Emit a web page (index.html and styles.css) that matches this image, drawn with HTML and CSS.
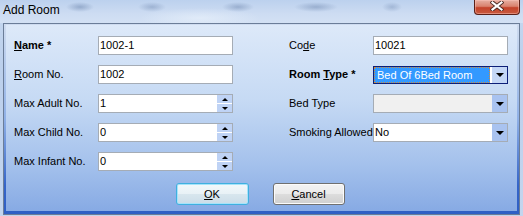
FILE: index.html
```html
<!DOCTYPE html>
<html>
<head>
<meta charset="utf-8">
<link rel="stylesheet" href="styles.css">
</head>
<body>
<div class="window">
  <div class="titlebar">
    <span class="title">Add Room</span>
    <div class="close">
      <svg width="14" height="10" viewBox="0 0 14 10">
        <path d="M2.5 1.5 L11.5 8.5 M11.5 1.5 L2.5 8.5" stroke="#4a2a24" stroke-width="4" stroke-linecap="square"/>
        <path d="M2.5 1.5 L11.5 8.5 M11.5 1.5 L2.5 8.5" stroke="#ffffff" stroke-width="2.2" stroke-linecap="square"/>
      </svg>
    </div>
  </div>
  <div class="client">
    <div class="form">
      <div class="col">
        <label class="lbl bold"><u>N</u>ame *</label>
        <div class="field"><span class="val">1002-1</span></div>

        <label class="lbl"><u>R</u>oom No.</label>
        <div class="field"><span class="val">1002</span></div>

        <label class="lbl">Max Adult No.</label>
        <div class="field"><span class="val">1</span><span class="spin"><span class="sb"><i class="up"></i></span><span class="sb"><i class="down"></i></span></span></div>

        <label class="lbl">Max Child No.</label>
        <div class="field"><span class="val">0</span><span class="spin"><span class="sb"><i class="up"></i></span><span class="sb"><i class="down"></i></span></span></div>

        <label class="lbl">Max Infant No.</label>
        <div class="field"><span class="val">0</span><span class="spin"><span class="sb"><i class="up"></i></span><span class="sb"><i class="down"></i></span></span></div>
      </div>
      <div class="col">
        <label class="lbl">Co<u>d</u>e</label>
        <div class="field"><span class="val">10021</span></div>

        <label class="lbl bold">Room <u>T</u>ype *</label>
        <div class="field select focused"><span class="sel">Bed Of 6Bed Room</span><span class="drop"><i class="down big"></i></span></div>

        <label class="lbl">Bed Type</label>
        <div class="field select disabled"><span class="val"></span><span class="drop"><i class="down big"></i></span></div>

        <label class="lbl">Smoking Allowed</label>
        <div class="field select"><span class="val">No</span><span class="drop"><i class="down big"></i></span></div>
      </div>
    </div>
    <div class="buttons">
      <button class="btn default"><u>O</u>K</button>
      <button class="btn cancel"><u>C</u>ancel</button>
    </div>
  </div>
</div>
</body>
</html>
```
FILE: styles.css
```css
html, body {
  margin: 0;
  padding: 0;
}
body {
  width: 523px;
  height: 216px;
  overflow: hidden;
  font-family: "Liberation Sans", Arial, sans-serif;
  font-size: 11px;
  color: #000;
}
.window {
  width: 523px;
  height: 216px;
  background: linear-gradient(#c6d8f0, #bcd0ec 30%, #c3d5ee);
  display: flex;
  flex-direction: column;
}
.titlebar {
  height: 23px;
  display: flex;
  justify-content: space-between;
  align-items: flex-start;
  background:
    radial-gradient(ellipse 14px 5px at 80px 7px, rgba(110,135,175,0.55), transparent),
    radial-gradient(ellipse 14px 5px at 152px 7px, rgba(110,135,175,0.45), transparent),
    radial-gradient(ellipse 16px 5px at 238px 7px, rgba(110,135,175,0.5), transparent),
    radial-gradient(ellipse 22px 5px at 316px 7px, rgba(110,135,175,0.5), transparent),
    radial-gradient(ellipse 10px 5px at 392px 7px, rgba(110,135,175,0.4), transparent),
    radial-gradient(ellipse 60px 10px at 200px 18px, rgba(235,243,252,0.6), transparent),
    linear-gradient(#bcd1ee, #cddcf2 60%, #d3e1f4);
}
.title {
  font-size: 12px;
  line-height: 14px;
  padding: 3px 0 0 3px;
  color: #000;
}
.close {
  width: 46px;
  height: 15px;
  margin-right: 3px;
  box-sizing: border-box;
  border: 1px solid #5b2018;
  border-top: none;
  border-radius: 0 0 4px 4px;
  background: linear-gradient(#e7b0a3, #d9826e 45%, #c4432b 55%, #c85a3e);
  box-shadow: inset 0 0 0 1px rgba(255,200,190,0.45);
  display: flex;
  justify-content: center;
  align-items: flex-start;
}
.close svg {
  display: block;
  margin-top: 1px;
}
.client {
  margin: 1px 0 0 4px;
  width: 515px;
  height: 190px;
  box-sizing: border-box;
  border-style: solid;
  border-color: transparent;
  border-width: 1px 2px 3px 2px;
  background:
    linear-gradient(#dde9f9, #c6daf4 40%, #a4c1ec 75%, #87aae4) padding-box,
    linear-gradient(#cfdcf0, #8fb0e6 50%, #3565c8 85%, #2f5fc4) border-box;
  box-shadow: 0 0 0 1px #6b7d98;
  display: flex;
  flex-direction: column;
}
.form {
  display: flex;
  gap: 56px;
  padding: 11px 0 0 8px;
}
.col {
  display: grid;
  grid-template-columns: 84px 135px;
  grid-auto-rows: 19px;
  row-gap: 10px;
  align-items: center;
}
.lbl {
  white-space: nowrap;
  line-height: 13px;
}
.bold {
  font-weight: bold;
}
.field {
  height: 19px;
  box-sizing: border-box;
  border: 1px solid #a5acb5;
  background: #fff;
  display: flex;
  align-items: stretch;
}
.val {
  flex: 1;
  line-height: 17px;
  padding-left: 1px;
  white-space: nowrap;
}
.spin {
  width: 15px;
  display: flex;
  flex-direction: column;
  gap: 1px;
}
.sb {
  flex: 1;
  background: #bfd3f5;
  display: flex;
  justify-content: center;
  align-items: center;
}
.up, .down {
  width: 0;
  height: 0;
  border-left: 3px solid transparent;
  border-right: 3px solid transparent;
}
.up {
  border-bottom: 3px solid #000;
}
.down {
  border-top: 3px solid #000;
}
.down.big {
  border-left-width: 4px;
  border-right-width: 4px;
  border-top-width: 4px;
}
.select .drop {
  width: 15px;
  background: #a9c3f0;
  display: flex;
  justify-content: center;
  align-items: center;
}
.select.disabled {
  background: #f0f0f0;
}
.select.focused {
  border-color: #0d1f78;
  height: 18px;
}
.select.focused .drop {
  background: #c4d7f6;
  margin-left: 2px;
}
.sel {
  flex: 1;
  background: #3399ff;
  color: #fff;
  border: 1px dotted #d08a3c;
  line-height: 14px;
  padding-left: 2px;
  white-space: nowrap;
}
.buttons {
  display: flex;
  justify-content: center;
  gap: 24px;
  margin-top: 12px;
  padding-right: 3px;
}
.btn {
  height: 22px;
  box-sizing: border-box;
  font-family: "Liberation Sans", Arial, sans-serif;
  font-size: 11px;
  color: #000;
  padding: 0;
  border-radius: 3px;
  background: linear-gradient(#f3f3f3, #ebebeb 50%, #dddddd 51%, #cfcfcf);
}
.btn.default {
  width: 73px;
  border: 1px solid #3fb0e0;
  box-shadow: inset 0 0 0 1px #a6e3fa;
  background: linear-gradient(#f2f8fb, #e8f1f6 50%, #d8e6ee 51%, #cbdde8);
}
.btn.cancel {
  width: 72px;
  border: 1px solid #707070;
  box-shadow: inset 0 0 0 1px #fbfbfb;
}
```
